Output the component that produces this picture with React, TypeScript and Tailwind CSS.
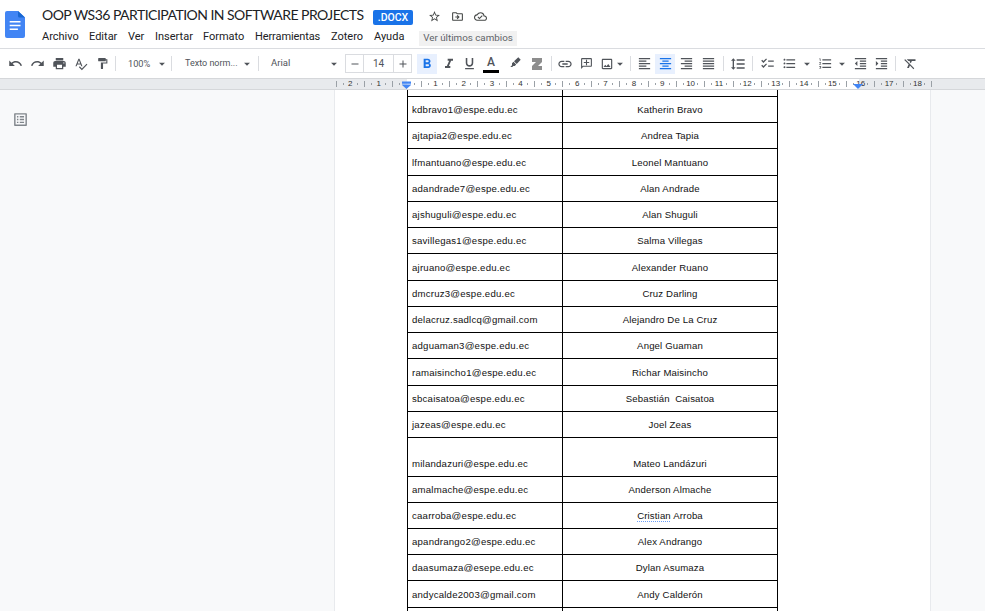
import React from "react";
import {
  MdUndo, MdRedo, MdPrint, MdSpellcheck, MdFormatPaint, MdRemove, MdAdd, MdFormatBold, MdFormatItalic,
  MdFormatUnderlined, MdLink, MdOutlineAddComment, MdOutlineImage, MdFormatAlignLeft, MdFormatAlignCenter,
  MdFormatAlignRight, MdFormatAlignJustify, MdFormatLineSpacing, MdChecklist, MdFormatListBulleted,
  MdFormatListNumbered, MdFormatIndentDecrease, MdFormatIndentIncrease, MdFormatClear, MdStarBorder,
  MdOutlineCloudDone, MdArrowDropDown, MdListAlt, MdOutlineDriveFileMove,
} from "react-icons/md";

const Cell = ({ className, children }: { className: string; children?: React.ReactNode }) => (
  <div className={`flex h-5 shrink-0 items-center justify-center ${className}`}>{children}</div>
);

const Sep = ({ className = "" }: { className?: string }) => (
  <div className={`h-[15px] w-px shrink-0 bg-[#dadce0] ${className}`} />
);

const Header = () => (
  <header className="flex h-12 shrink-0 bg-white">
    <svg className="ml-[5px] mt-[11px] h-[27px] w-5 shrink-0" viewBox="0 0 20 27">
      <path d="M2 0h11l7 6.6V25a2 2 0 0 1-2 2H2a2 2 0 0 1-2-2V2a2 2 0 0 1 2-2z" fill="#4285f4" />
      <path d="M13 0l7 6.6h-5.5a1.500 1.500 0 0 1-1.500-1.500z" fill="#1967d2" />
      <path d="M4.700 10h10.800v1.500H4.700zM4.700 13.800h10.800v1.500H4.700zM4.700 17.600h8.200v1.500H4.700z" fill="#fff" />
    </svg>
    <div className="ml-[17px] flex flex-col">
      <div className="mt-[6px] flex h-[20px] items-center">
        <span className="w-[331px] whitespace-nowrap pb-[2px] font-['Lato',sans-serif] text-[14px] leading-5 tracking-[-0.53px] text-[#202124]">
          OOP WS36 PARTICIPATION IN SOFTWARE PROJECTS
        </span>
        <span className="mt-[3px] flex h-[15px] w-10 items-center justify-center rounded-[2px] bg-[#1a73e8] font-['Roboto',sans-serif] text-[10.5px] font-medium text-white">
          .DOCX
        </span>
        <MdStarBorder className="ml-[15px] size-[13px] text-[#444746]" />
        <MdOutlineDriveFileMove className="ml-[10px] size-[13px] text-[#444746]" />
        <MdOutlineCloudDone className="ml-[10px] size-[13px] text-[#444746]" />
      </div>
      <nav className="mt-[3px] flex h-[17px] items-center whitespace-nowrap font-['Roboto',sans-serif] text-[11px] text-[#202124]">
        <span className="w-[47px]">Archivo</span>
        <span className="w-[39px]">Editar</span>
        <span className="w-[27px]">Ver</span>
        <span className="w-12">Insertar</span>
        <span className="w-[52px]">Formato</span>
        <span className="w-[76px] tracking-[-0.1px]">Herramientas</span>
        <span className="w-[43px]">Zotero</span>
        <span className="w-[45px]">Ayuda</span>
        <span className="mt-px flex h-[15px] w-[98px] items-center justify-center bg-[#f1f1f1] text-[9.800px] text-[#5f6368]">
          Ver últimos cambios
        </span>
      </nav>
    </div>
  </header>
);

const Toolbar = () => (
  <div className="flex h-[30px] shrink-0 items-center border-t border-[#dadce0] bg-white font-['Roboto',sans-serif] text-[10px] text-[#50545a] [&_svg]:shrink-0">
    <Cell className="ml-[4px] w-[22px]"><MdUndo size={15} /></Cell>
    <Cell className="w-[22px]"><MdRedo size={15} /></Cell>
    <Cell className="w-[22px]"><MdPrint size={15} /></Cell>
    <Cell className="w-[21px]"><MdSpellcheck size={14} /></Cell>
    <Cell className="w-[22px]"><MdFormatPaint size={13} /></Cell>
    <Sep className="ml-[2px]" />
    <span className="ml-3 w-[27px] text-[9.200px]">100%</span>
    <Cell className="w-[14px]"><MdArrowDropDown size={14} /></Cell>
    <Sep className="ml-[2px]" />
    <span className="ml-[13px] w-[55px] whitespace-nowrap text-[9px]">Texto norm...</span>
    <Cell className="w-[14px]"><MdArrowDropDown size={14} /></Cell>
    <Sep className="ml-[4px]" />
    <span className="ml-[12px] w-[56px] text-[9.500px]">Arial</span>
    <Cell className="w-[14px]"><MdArrowDropDown size={14} /></Cell>
    <div className="ml-[4px] flex h-[19px] w-[67px] shrink-0 border border-[#dadce0]">
      <div className="flex w-[17px] items-center justify-center"><MdRemove size={12} /></div>
      <div className="flex flex-1 items-center justify-center border-x border-[#dadce0] text-[10px]">14</div>
      <div className="flex w-[17px] items-center justify-center"><MdAdd size={12} /></div>
    </div>
    <Cell className="ml-[5px] w-[20px] bg-[#e8f0fe] text-[#1a73e8]"><MdFormatBold size={16} /></Cell>
    <Cell className="ml-[1px] w-[21px]"><MdFormatItalic size={16} /></Cell>
    <Cell className="w-[21px]"><MdFormatUnderlined size={15} /></Cell>
    <Cell className="w-[22px]">
      <span className="flex h-[19px] w-4 items-center justify-center border-b-[3px] border-black text-[12px] font-medium">A</span>
    </Cell>
    <Cell className="ml-[1px] w-[24px]">
      <svg className="mb-0.5 size-[11px]" viewBox="0 0 11 11" fill="currentColor">
        <path d="M8.300.3l2.400 2.400-4 4.200-2.700-2.700zM3.500 4.800l2.700 2.700-1.500 1.600H3.300l-1 1H.3l1.700-1.900V6.300z" />
      </svg>
    </Cell>
    <Cell className="w-[20px]">
      <svg className="h-3 w-[10px]" viewBox="0 0 10 12"><path d="M0 0h10v4L6 8h4v4H0V8l4-4H0z" fill="#8d8d8d" /></svg>
    </Cell>
    <Sep className="ml-[4px]" />
    <Cell className="ml-[2px] w-[22px]"><MdLink size={16} /></Cell>
    <Cell className="w-[21px]"><MdOutlineAddComment className="-scale-x-100" size={13} /></Cell>
    <Cell className="w-[19px]"><MdOutlineImage size={14} /></Cell>
    <Cell className="w-[8px]"><MdArrowDropDown size={14} /></Cell>
    <Sep className="ml-[6px]" />
    <Cell className="ml-[3px] w-[21px]"><MdFormatAlignLeft size={15} /></Cell>
    <Cell className="w-[20px] bg-[#e8f0fe] text-[#1a73e8]"><MdFormatAlignCenter size={15} /></Cell>
    <Cell className="ml-[1px] w-[21px]"><MdFormatAlignRight size={15} /></Cell>
    <Cell className="w-[22px]"><MdFormatAlignJustify size={15} /></Cell>
    <Sep className="ml-[4px]" />
    <Cell className="ml-[4px] w-[20px]"><MdFormatLineSpacing size={16} /></Cell>
    <Sep className="ml-[4px]" />
    <Cell className="ml-[3px] w-[22px]"><MdChecklist size={15} /></Cell>
    <Cell className="w-[23px]"><MdFormatListBulleted size={15} /></Cell>
    <Cell className="w-[11px]"><MdArrowDropDown size={14} /></Cell>
    <Cell className="ml-[2px] w-[22px]"><MdFormatListNumbered size={15} /></Cell>
    <Cell className="w-[11px]"><MdArrowDropDown size={14} /></Cell>
    <Cell className="ml-[2px] w-[22px]"><MdFormatIndentDecrease size={15} /></Cell>
    <Cell className="w-[21px]"><MdFormatIndentIncrease size={15} /></Cell>
    <Sep className="ml-[3px]" />
    <Cell className="ml-[3px] w-[22px]"><MdFormatClear size={15} /></Cell>
  </div>
);

const marks = ["2", "1", "", "1", "2", "3", "4", "5", "6", "7", "8", "9", "10", "11", "12", "13", "14", "15", "16", "17", "18"];

const Ruler = () => (
  <div className="relative flex h-3 shrink-0 border-y border-[#d5d7da] bg-[#e8eaed] pl-[335.6px]">
    <div className="absolute left-[407px] top-0 h-full w-[452px] bg-white" />
    <div className="relative flex items-center font-['Liberation_Sans',Arial,sans-serif] text-[8px] leading-none text-[#333]">
      {marks.map((m, i) => (
        <div key={i} className="flex w-[28.36px] items-center">
          <i className="h-[6px] w-px bg-[#9aa0a6]" />
          <i className="ml-[6px] h-[2px] w-px bg-[#9aa0a6]" />
          <span className="flex flex-1 justify-center">{m}</span>
          <i className="mr-[6px] h-[2px] w-px bg-[#9aa0a6]" />
        </div>
      ))}
      <i className="h-[6px] w-px bg-[#9aa0a6]" />
    </div>
    <svg className="absolute left-[402px] top-[2px] h-[9px] w-[9px]" viewBox="0 0 10 9">
      <path d="M0 0h10v2.500H0zM0 3.300h10v.7L5 8.500 0 4z" fill="#4285f4" />
    </svg>
    <svg className="absolute left-[853px] top-[5px] h-[5px] w-[10px]" viewBox="0 0 10 5">
      <path d="M0 0h10L5 5z" fill="#4285f4" />
    </svg>
  </div>
);

const rows: [string, string][] = [
  ["kdbravo1@espe.edu.ec", "Katherin Bravo"],
  ["ajtapia2@espe.edu.ec", "Andrea Tapia"],
  ["lfmantuano@espe.edu.ec", "Leonel Mantuano"],
  ["adandrade7@espe.edu.ec", "Alan Andrade"],
  ["ajshuguli@espe.edu.ec", "Alan Shuguli"],
  ["savillegas1@espe.edu.ec", "Salma Villegas"],
  ["ajruano@espe.edu.ec", "Alexander Ruano"],
  ["dmcruz3@espe.edu.ec", "Cruz Darling"],
  ["delacruz.sadlcq@gmail.com", "Alejandro De La Cruz"],
  ["adguaman3@espe.edu.ec", "Angel Guaman"],
  ["ramaisincho1@espe.edu.ec", "Richar Maisincho"],
  ["sbcaisatoa@espe.edu.ec", "Sebastián  Caisatoa"],
  ["jazeas@espe.edu.ec", "Joel Zeas"],
  ["milandazuri@espe.edu.ec", "Mateo Landázuri"],
  ["amalmache@espe.edu.ec", "Anderson Almache"],
  ["caarroba@espe.edu.ec", "Cristian Arroba"],
  ["apandrango2@espe.edu.ec", "Alex Andrango"],
  ["daasumaza@esepe.edu.ec", "Dylan Asumaza"],
  ["andycalde2003@gmail.com", "Andy Calderón"],
];

const Name = ({ text }: { text: string }) =>
  text.startsWith("Cristian") ? (
    <>
      <span className="underline decoration-[#6b9df7] decoration-dotted decoration-[1px] underline-offset-[2px]">Cristian</span> Arroba
    </>
  ) : (
    <>{text}</>
  );

const Document = () => (
  <main className="flex min-h-0 flex-1 overflow-hidden bg-[#f8f9fa]">
    <aside className="w-[334px] shrink-0 pl-[12px] pt-[21px]">
      <MdListAlt className="size-[17px] text-[#80868b]" />
    </aside>
    <div className="w-[597px] shrink-0 border-x border-[#e8eaed] bg-white pl-[72px]">
      <div className="w-[371px] border-x border-black font-['Liberation_Sans',Arial,sans-serif] text-[9.6px] tracking-[0.15px] text-[#111]">
        <div className="flex h-[6px]">
          <div className="w-[155px] border-r border-black" />
        </div>
        {rows.map(([mail, name], i) => (
          <div key={mail} className={`flex border-t border-black leading-3 ${i === 13 ? "h-[38.500px]" : "h-[26.240px]"}`}>
            <div className="flex w-[155px] shrink-0 items-end whitespace-nowrap border-r border-black pb-[6px] pl-1 tracking-[0.220px]">{mail}</div>
            <div className="flex-1 self-end whitespace-pre pb-[6px] text-center"><Name text={name} /></div>
          </div>
        ))}
        <div className="flex h-[26px] border-t border-black">
          <div className="w-[155px] border-r border-black" />
        </div>
      </div>
    </div>
  </main>
);

export default function App() {
  return (
    <div className="flex h-[611px] w-[985px] flex-col overflow-hidden bg-white">
      <Header />
      <Toolbar />
      <Ruler />
      <Document />
    </div>
  );
}
